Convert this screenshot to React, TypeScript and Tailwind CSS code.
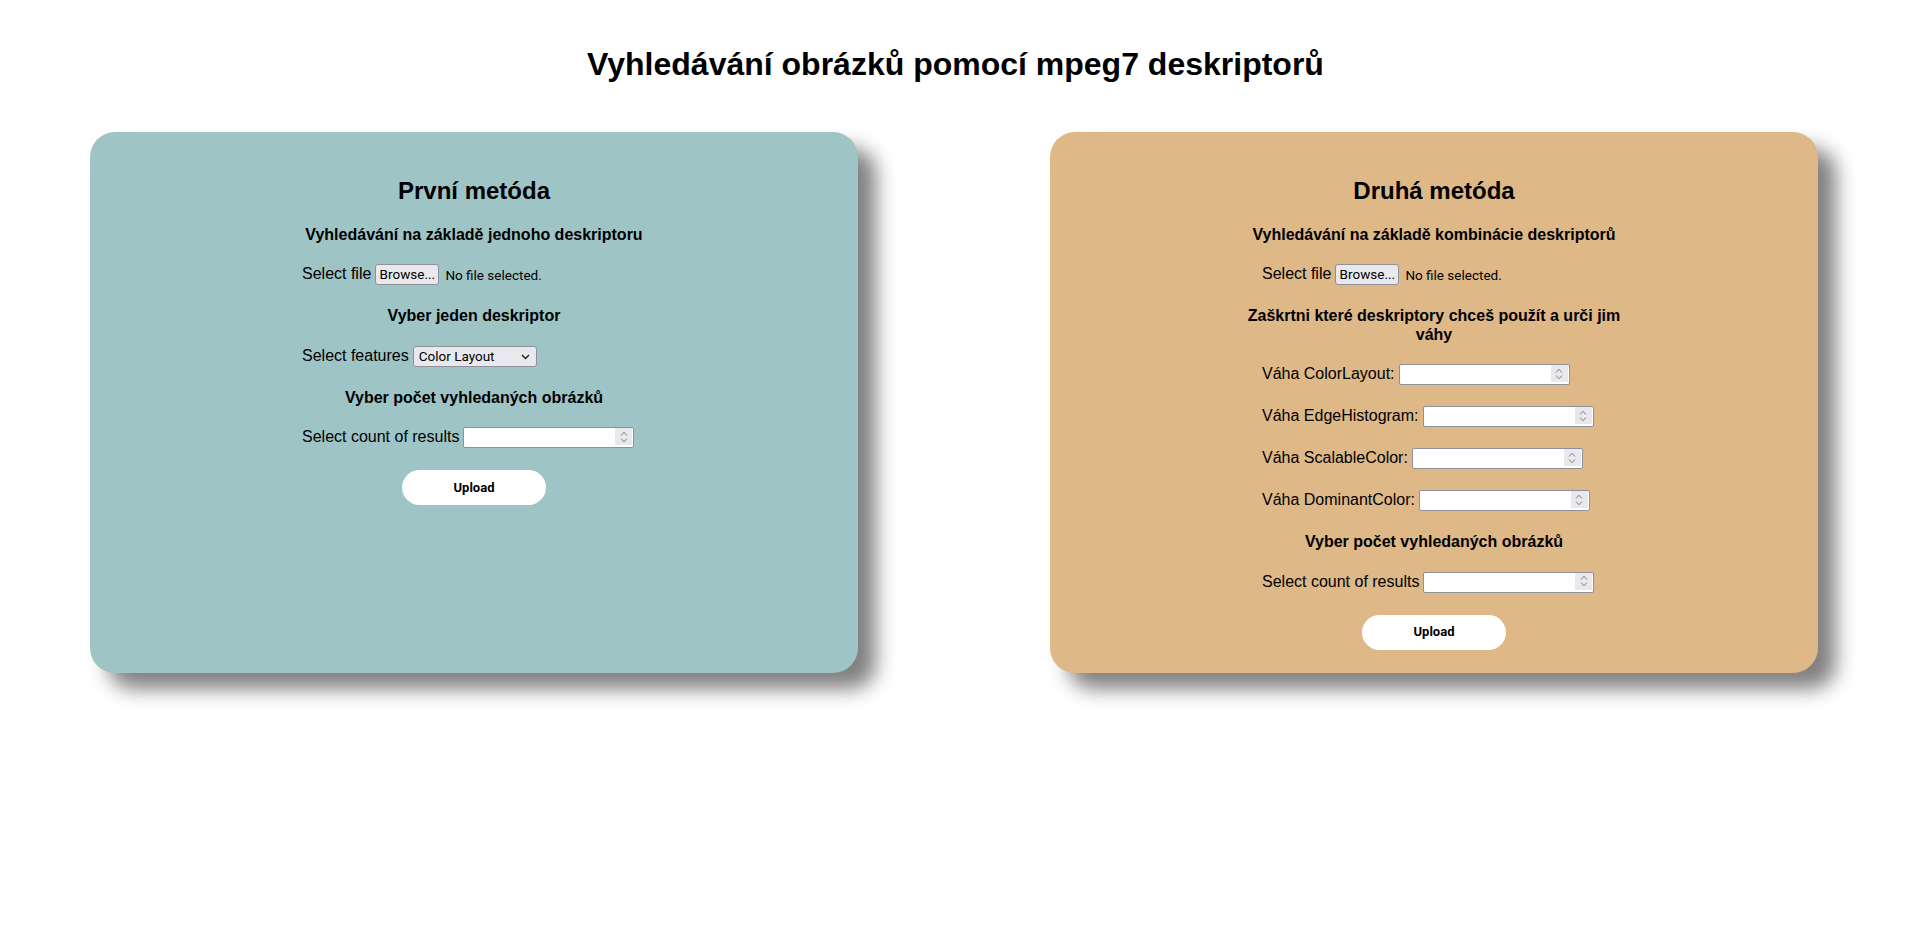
import type { ReactNode } from 'react';

const UI = "font-[Roboto,'Liberation_Sans',sans-serif]";

function Spinner() {
  return (
    <span className="pointer-events-none absolute right-[2px] top-[1px] flex h-[17px] w-[17px] flex-col items-center justify-center gap-[2px] bg-[#e9e9ed]">
      <svg width="8" height="5" viewBox="0 0 8 5" fill="none" stroke="#7b7b85" strokeWidth="1">
        <path d="M1 4.5 L4 1.2 L7 4.5" />
      </svg>
      <svg width="8" height="5" viewBox="0 0 8 5" fill="none" stroke="#7b7b85" strokeWidth="1">
        <path d="M1 0.5 L4 3.8 L7 0.5" />
      </svg>
    </span>
  );
}

function NumberField({ label }: { label: string }) {
  return (
    <div className="relative -mt-px h-[21px] w-[171px]">
      <input
        type="number"
        aria-label={label}
        className="block h-full w-full rounded-[2px] border border-[#8f8f9d] bg-white px-1 text-[13px] [appearance:textfield] [&::-webkit-inner-spin-button]:appearance-none"
      />
      <Spinner />
    </div>
  );
}

function FileField() {
  return (
    <div className={`-mt-px flex items-center gap-[6px] text-[13.5px] text-black ${UI}`}>
      <button className="h-[21px] w-[64px] rounded-[3px] border border-[#8f8f9d] bg-[#e9e9ed] leading-[19px]">
        Browse...
      </button>
      <span>No file selected.</span>
    </div>
  );
}

function Row({ label, children }: { label: string; children: ReactNode }) {
  return (
    <div className="flex h-[21px] items-start gap-1 pl-5">
      <span className="leading-[18px] whitespace-nowrap">{label}</span>
      {children}
    </div>
  );
}

function Heading({ children }: { children: ReactNode }) {
  return <h4 className="text-center text-[16px] font-bold leading-[18.4px]">{children}</h4>;
}

function UploadButton() {
  return (
    <div className="flex justify-center">
      <button className={`h-[35px] w-[144px] rounded-full bg-white text-[13px] font-bold text-black ${UI}`}>
        Upload
      </button>
    </div>
  );
}

function Card({ title, color, children }: { title: string; color: string; children: ReactNode }) {
  return (
    <section className={`w-[768px] rounded-[25px] pt-[45px] pb-[23px] shadow-[18px_16px_20px_#808080] ${color}`}>
      <div className="mx-auto flex w-[384px] flex-col gap-[21px]">
        <h2 className="text-center text-[24px] font-bold leading-[28px]">{title}</h2>
        {children}
      </div>
    </section>
  );
}

export default function App() {
  return (
    <main className="min-h-screen bg-white pt-[46px] text-[16px] text-black font-['Liberation_Sans',Arial,sans-serif]">
      <h1 className="text-center text-[32px] font-bold leading-[37px]">
        Vyhledávání obrázků pomocí mpeg7 deskriptorů
      </h1>

      <div className="mt-[49px] flex items-stretch gap-[192px] pl-[90px]">
        <Card title="První metóda" color="bg-[#9fc4c5]">
          <Heading>Vyhledávání na základě jednoho deskriptoru</Heading>
          <Row label="Select file">
            <FileField />
          </Row>
          <Heading>Vyber jeden deskriptor</Heading>
          <Row label="Select features">
            <div className={`relative -mt-px flex h-[21px] w-[124px] items-center rounded-[3px] border border-[#8f8f9d] bg-[#e9e9ed] pl-[5px] text-[13.5px] ${UI}`}>
              Color Layout
              <svg className="absolute right-[6px] top-[7px]" width="9" height="6" viewBox="0 0 9 6" fill="none" stroke="#1f1f1f" strokeWidth="1.4">
                <path d="M1 1 L4.5 4.5 L8 1" />
              </svg>
            </div>
          </Row>
          <Heading>Vyber počet vyhledaných obrázků</Heading>
          <Row label="Select count of results">
            <NumberField label="Select count of results" />
          </Row>
          <UploadButton />
        </Card>

        <Card title="Druhá metóda" color="bg-[#deb887]">
          <Heading>Vyhledávání na základě kombinácie deskriptorů</Heading>
          <Row label="Select file">
            <FileField />
          </Row>
          <Heading>Zaškrtni které deskriptory chceš použít a urči jim váhy</Heading>
          <Row label="Váha ColorLayout:">
            <NumberField label="Váha ColorLayout" />
          </Row>
          <Row label="Váha EdgeHistogram:">
            <NumberField label="Váha EdgeHistogram" />
          </Row>
          <Row label="Váha ScalableColor:">
            <NumberField label="Váha ScalableColor" />
          </Row>
          <Row label="Váha DominantColor:">
            <NumberField label="Váha DominantColor" />
          </Row>
          <Heading>Vyber počet vyhledaných obrázků</Heading>
          <Row label="Select count of results">
            <NumberField label="Select count of results" />
          </Row>
          <UploadButton />
        </Card>
      </div>
    </main>
  );
}
